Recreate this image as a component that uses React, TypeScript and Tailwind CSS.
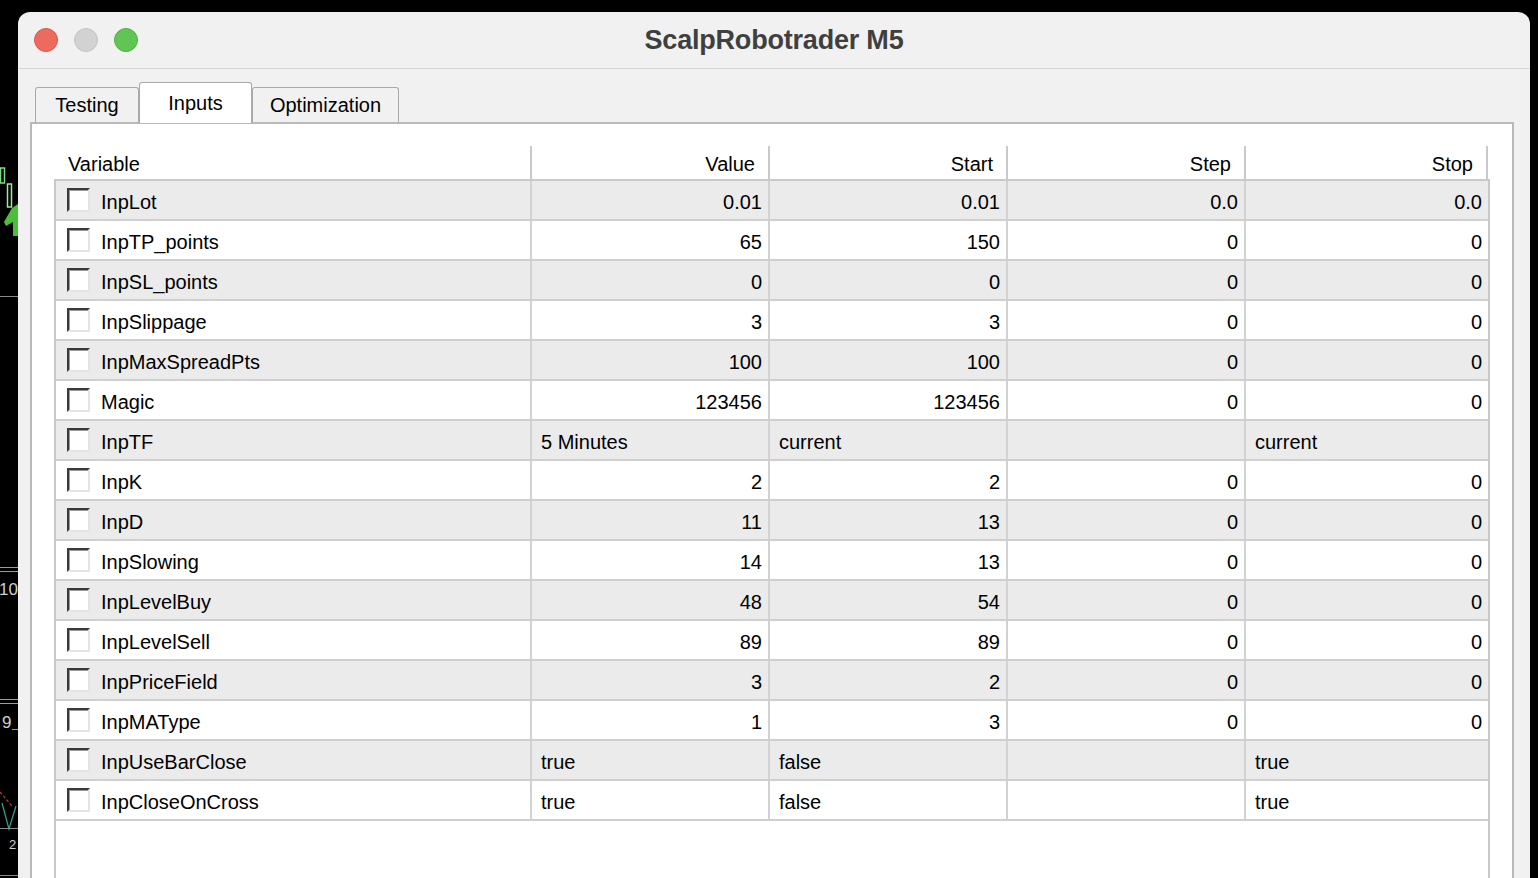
import React from "react";

type Row = { name: string; cells: string[]; text?: boolean };

const rows: Row[] = [
  { name: "InpLot", cells: ["0.01", "0.01", "0.0", "0.0"] },
  { name: "InpTP_points", cells: ["65", "150", "0", "0"] },
  { name: "InpSL_points", cells: ["0", "0", "0", "0"] },
  { name: "InpSlippage", cells: ["3", "3", "0", "0"] },
  { name: "InpMaxSpreadPts", cells: ["100", "100", "0", "0"] },
  { name: "Magic", cells: ["123456", "123456", "0", "0"] },
  { name: "InpTF", cells: ["5 Minutes", "current", "", "current"], text: true },
  { name: "InpK", cells: ["2", "2", "0", "0"] },
  { name: "InpD", cells: ["11", "13", "0", "0"] },
  { name: "InpSlowing", cells: ["14", "13", "0", "0"] },
  { name: "InpLevelBuy", cells: ["48", "54", "0", "0"] },
  { name: "InpLevelSell", cells: ["89", "89", "0", "0"] },
  { name: "InpPriceField", cells: ["3", "2", "0", "0"] },
  { name: "InpMAType", cells: ["1", "3", "0", "0"] },
  { name: "InpUseBarClose", cells: ["true", "false", "", "true"], text: true },
  { name: "InpCloseOnCross", cells: ["true", "false", "", "true"], text: true },
];

const colW = ["w-[238px]", "w-[238px]", "w-[238px]", "w-[242px]"];

// the chart that peeks out behind the window on the left
function ChartStrip() {
  return (
    <svg className="absolute left-0 top-0" width="18" height="878" viewBox="0 0 18 878">
      <rect x="0.5" y="168" width="4" height="15" fill="none" stroke="#7be07b" strokeWidth="1.5" />
      <rect x="7.5" y="184" width="4" height="23" fill="none" stroke="#9bea9b" strokeWidth="1.5" />
      <path d="M4 222 L12 208 L18 204 L18 236 L13 236 L13 222 L6 226 Z" fill="#4cbf3a" />
      <line x1="0" y1="296.5" x2="18" y2="296.5" stroke="#8a8a8a" strokeWidth="1" />
      <line x1="0" y1="567.5" x2="18" y2="567.5" stroke="#9a9a9a" strokeWidth="1" />
      <line x1="0" y1="571.5" x2="18" y2="571.5" stroke="#9a9a9a" strokeWidth="1" />
      <text x="-1" y="595" fill="#cfcfcf" fontSize="17" fontFamily="Liberation Sans, sans-serif">10</text>
      <line x1="0" y1="699.5" x2="18" y2="699.5" stroke="#9a9a9a" strokeWidth="1" />
      <line x1="0" y1="703.5" x2="18" y2="703.5" stroke="#9a9a9a" strokeWidth="1" />
      <text x="2" y="728" fill="#cfcfcf" fontSize="17" fontFamily="Liberation Sans, sans-serif">9</text>
      <line x1="12" y1="729.5" x2="18" y2="729.5" stroke="#9a9a9a" strokeWidth="1" />
      <path d="M0 792 L12 806" stroke="#c23a3a" strokeWidth="1.2" strokeDasharray="3 2" fill="none" />
      <path d="M2 803 L9 829 L16 806" stroke="#2fa58a" strokeWidth="1.2" fill="none" />
      <line x1="0" y1="828.5" x2="18" y2="828.5" stroke="#8a8a8a" strokeWidth="1" />
      <text x="9" y="849" fill="#cfcfcf" fontSize="13" fontFamily="Liberation Sans, sans-serif">2</text>
      <line x1="0" y1="875.5" x2="18" y2="875.5" stroke="#8a8a8a" strokeWidth="1" />
    </svg>
  );
}

function Checkbox() {
  return (
    <span className="block w-[23px] h-[24px] bg-white border-2 border-t-[#3a3a3a] border-l-[#3a3a3a] border-b-[#e4e4e4] border-r-[#e4e4e4] shadow-[inset_1px_1px_0_#9a9a9a]" />
  );
}

export default function App() {
  return (
    <div
      className="relative w-[1538px] h-[878px] bg-black overflow-hidden text-black"
      style={{ fontFamily: '"Liberation Sans", Arial, sans-serif' }}
    >
      <ChartStrip />

      {/* window */}
      <div className="ml-[18px] mt-[12px] w-[1512px] h-[866px] bg-[#f1f1f1] rounded-t-[12px] flex flex-col">
        {/* title bar */}
        <div className="h-[57px] shrink-0 border-b border-[#d6d6d6] grid grid-cols-[1fr_auto_1fr] items-center">
          <div className="flex items-center gap-[16px] pl-[16px]">
            <span className="w-[24px] h-[24px] rounded-full bg-[#ec6a5e] border border-[#d9574c]" />
            <span className="w-[24px] h-[24px] rounded-full bg-[#d2d2d2] border border-[#c4c4c4]" />
            <span className="w-[24px] h-[24px] rounded-full bg-[#61c554] border border-[#52b046]" />
          </div>
          <div className="text-[27px] font-bold text-[#3f3f3f] tracking-[-0.2px]">ScalpRobotrader M5</div>
          <div />
        </div>

        {/* tabs */}
        <div className="flex items-end pl-[17px] h-[53px] shrink-0 relative z-10">
          <div className="h-[35px] w-[104px] border border-b-0 border-[#a9a9a9] rounded-t-[3px] bg-[#f1f1f1] flex items-center justify-center text-[20px]">
            Testing
          </div>
          <div className="h-[41px] w-[113px] -mb-px border border-b-0 border-[#a9a9a9] rounded-t-[3px] bg-white flex items-start justify-center text-[20px] pt-[5px]">
            Inputs
          </div>
          <div className="h-[35px] w-[147px] border border-b-0 border-[#a9a9a9] rounded-t-[3px] bg-[#f1f1f1] flex items-center justify-center text-[20px]">
            Optimization
          </div>
        </div>

        {/* panel */}
        <div className="ml-[12px] w-[1484px] flex-1 bg-white border-2 border-b-0 border-[#b9b9b9] pl-[22px] pt-[22px] flex flex-col">
          {/* header */}
          <div className="flex h-[33px] shrink-0 pl-[2px] text-[20px]">
            <div className="w-[476px] border-r-2 border-[#c9c9c9] flex items-center pl-[12px] pt-[2px]">Variable</div>
            {["Value", "Start", "Step", "Stop"].map((h, i) => (
              <div
                key={h}
                className={`${colW[i]} border-r-2 border-[#c9c9c9] flex items-center justify-end pr-[13px] pt-[2px]`}
              >
                {h}
              </div>
            ))}
          </div>

          {/* body */}
          <div className="w-[1436px] flex-1 border-2 border-b-0 border-[#c9c9c9]">
            {rows.map((r, idx) => (
              <div
                key={r.name}
                className={`flex h-[40px] border-b-2 border-[#cfcfcf] text-[20px] ${idx % 2 === 0 ? "bg-[#ebebeb]" : "bg-white"}`}
              >
                <div className="w-[476px] border-r-2 border-[#d2d2d2] flex items-center pl-[11px] gap-[11px]">
                  <Checkbox />
                  <span className="pt-[3px]">{r.name}</span>
                </div>
                {r.cells.map((c, i) => (
                  <div
                    key={i}
                    className={`${colW[i]} ${i < 3 ? "border-r-2 border-[#d2d2d2]" : ""} flex items-center pt-[3px] ${
                      r.text ? "justify-start pl-[9px]" : "justify-end pr-[6px]"
                    }`}
                  >
                    {c}
                  </div>
                ))}
              </div>
            ))}
          </div>
        </div>
      </div>
    </div>
  );
}
